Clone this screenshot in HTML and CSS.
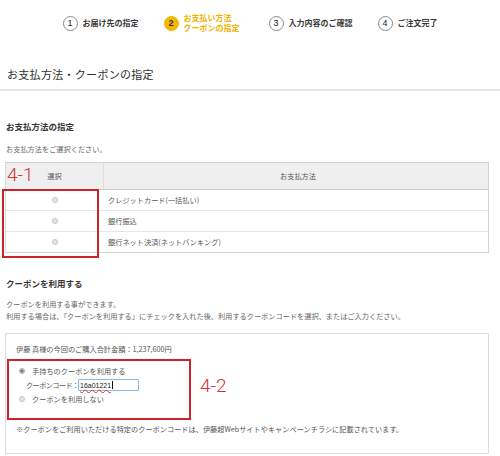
FILE: index.html
```html
<!DOCTYPE html>
<html lang="ja">
<head>
<meta charset="utf-8">
<title>お支払方法・クーポンの指定</title>
<link rel="stylesheet" href="styles.css">
</head>
<body>
<div class="page">
  <ol class="steps">
    <li class="step"><span class="step-num">1</span><span class="step-label">お届け先の指定</span></li>
    <li class="step current"><span class="step-num">2</span><span class="step-label">お支払い方法<br>クーポンの指定</span></li>
    <li class="step"><span class="step-num">3</span><span class="step-label">入力内容のご確認</span></li>
    <li class="step"><span class="step-num">4</span><span class="step-label">ご注文完了</span></li>
  </ol>

  <h1 class="page-title">お支払方法・クーポンの指定</h1>

  <section class="section pay">
    <h2 class="sec-title">お支払方法の指定</h2>
    <p class="note">お支払方法をご選択ください。</p>
    <div class="pay-table">
      <div class="pay-head">
        <div class="col-sel">選択</div>
        <div class="col-method">お支払方法</div>
      </div>
      <div class="pay-row">
        <div class="col-sel"><span class="radio"></span></div>
        <div class="col-method">クレジットカード(一括払い)</div>
      </div>
      <div class="pay-row">
        <div class="col-sel"><span class="radio"></span></div>
        <div class="col-method">銀行振込</div>
      </div>
      <div class="pay-row">
        <div class="col-sel"><span class="radio"></span></div>
        <div class="col-method">銀行ネット決済(ネットバンキング)</div>
      </div>
    </div>
  </section>

  <section class="section coupon">
    <h2 class="sec-title">クーポンを利用する</h2>
    <p class="note lines">クーポンを利用する事ができます。<br>利用する場合は、「クーポンを利用する」にチェックを入れた後、利用するクーポンコードを選択、またはご入力ください。</p>
    <div class="coupon-box">
      <p class="total">伊藤 真様の今回のご購入合計金額：1,237,600円</p>
      <div class="opt"><span class="radio checked"></span><span>手持ちのクーポンを利用する</span></div>
      <div class="code-row"><span class="code-label">クーポンコード：</span><span class="code-input"><span class="typed">16a01221</span><span class="caret"></span></span></div>
      <div class="opt"><span class="radio"></span><span>クーポンを利用しない</span></div>
      <p class="foot">※クーポンをご利用いただける特定のクーポンコードは、伊藤超Webサイトやキャンペーンチラシに記載されています。</p>
    </div>
  </section>

  <div class="annot-box box-41"></div>
  <div class="annot-label label-41">4-1</div>
  <div class="annot-box box-42"></div>
  <div class="annot-label label-42">4-2</div>
</div>
</body>
</html>
```

FILE: styles.css
```css
* { box-sizing: border-box; margin: 0; padding: 0; }

body {
  font-family: "Noto Sans CJK JP", "Noto Sans", sans-serif;
  color: #333;
  background: #fff;
  width: 500px;
  height: 456px;
  overflow: hidden;
}

.page { position: relative; }

/* steps */
.steps {
  list-style: none;
  display: flex;
  justify-content: center;
  align-items: center;
  gap: 25px;
  height: 45px;
  padding-top: 1px;
}
.step {
  display: flex;
  align-items: center;
  gap: 5px;
  font-size: 8px;
  font-weight: bold;
  color: #3a3a3a;
}
.step-num {
  width: 15px;
  height: 15px;
  border: 1px solid #8a8a8a;
  border-radius: 50%;
  display: flex;
  align-items: center;
  justify-content: center;
  font-family: "Liberation Sans", sans-serif;
  font-size: 9px;
  font-weight: normal;
  line-height: 1;
  color: #222;
}
.step-label { line-height: 10px; white-space: nowrap; }
.step.current { color: #f0b300; margin-right: 4px; }
.step.current .step-num {
  background: #f3b700;
  border-color: #f3b700;
  color: #333;
  font-weight: bold;
}

/* title */
.page-title {
  font-size: 11px;
  font-weight: normal;
  letter-spacing: .3px;
  line-height: 16px;
  padding: 21px 0 7px 7px;
  border-bottom: 2px solid #e9e9e9;
  color: #2e2e2e;
}

.section { padding-left: 5px; }
.sec-title {
  font-size: 8.5px;
  font-weight: bold;
  line-height: 12px;
  padding-left: 1px;
  color: #333;
}
.pay .sec-title { margin-top: 29px; }
.coupon .sec-title { margin-top: 24px; }

.note {
  font-size: 7.2px;
  line-height: 10px;
  color: #666;
  padding-left: 1px;
  margin-top: 12px;
}
.note.lines { line-height: 12px; margin-top: 9px; }

/* payment table */
.pay-table {
  margin-top: 8px;
  width: 484px;
  border: 1px solid #d2d2d2;
  border-left-color: #d3e5cc;
  font-size: 7.2px;
  color: #555;
}
.pay-head {
  display: flex;
  height: 27px;
  background: #efefef;
  border-bottom: 1px solid #cdcdcd;
}
.pay-head .col-sel { border-right: 1px solid #dedede; }
.pay-head .col-method { justify-content: center; }
.pay-row {
  display: flex;
  height: 21px;
  border-bottom: 1px solid #e6e6e6;
}
.pay-row:last-child { height: 20px; border-bottom: 0; }
.col-sel {
  width: 98px;
  display: flex;
  align-items: center;
  justify-content: center;
}
.col-method {
  flex: 1;
  display: flex;
  align-items: center;
  padding-left: 4px;
}

.radio {
  display: inline-block;
  width: 6px;
  height: 6px;
  border-radius: 50%;
  border: 1px solid #c4c4c4;
  background: #e6e6e6;
  flex: none;
}
.radio.checked {
  border-color: #aaa;
  background: radial-gradient(circle, #777 0 1.4px, #ddd 1.8px);
}

/* coupon box */
.coupon-box {
  margin-top: 11px;
  width: 484px;
  border: 1px solid #dcdcdc;
  padding: 9px 0 18px 10px;
  font-size: 7.2px;
  color: #555;
}
.total { line-height: 12px; }
.opt {
  display: flex;
  align-items: center;
  gap: 7px;
  height: 14px;
  padding-left: 3px;
}
.total + .opt { margin-top: 9px; }
.code-row {
  display: flex;
  align-items: center;
  height: 14px;
  padding-left: 10px;
}
.code-label { letter-spacing: -0.6px; width: 52px; white-space: nowrap; }
.code-input {
  display: flex;
  align-items: center;
  width: 61px;
  height: 12px;
  border: 1px solid #8db9e6;
  border-radius: 1px;
  padding-left: 1px;
  font-family: "Liberation Sans", sans-serif;
  font-size: 7px;
  color: #222;
}
.typed {
  text-decoration: underline wavy #e03030;
  text-decoration-thickness: 1px;
  text-underline-offset: 1px;
}
.caret {
  width: 1px;
  height: 8px;
  background: #111;
  margin-left: 1px;
}
.foot { line-height: 12px; margin-top: 17px; }

/* annotations */
.annot-box {
  position: absolute;
  border: 2px solid #cc2229;
}
.box-41 { left: 2px; top: 189px; width: 97px; height: 69px; }
.box-42 { left: 7px; top: 359px; width: 184px; height: 61px; }
.annot-label {
  position: absolute;
  font-family: Roboto, "Liberation Sans", sans-serif;
  font-weight: 300;
  font-size: 19px;
  line-height: 1;
  color: #d4343b;
}
.label-41 { left: 7px; top: 165px; }
.label-42 { left: 200px; top: 376px; }
```
